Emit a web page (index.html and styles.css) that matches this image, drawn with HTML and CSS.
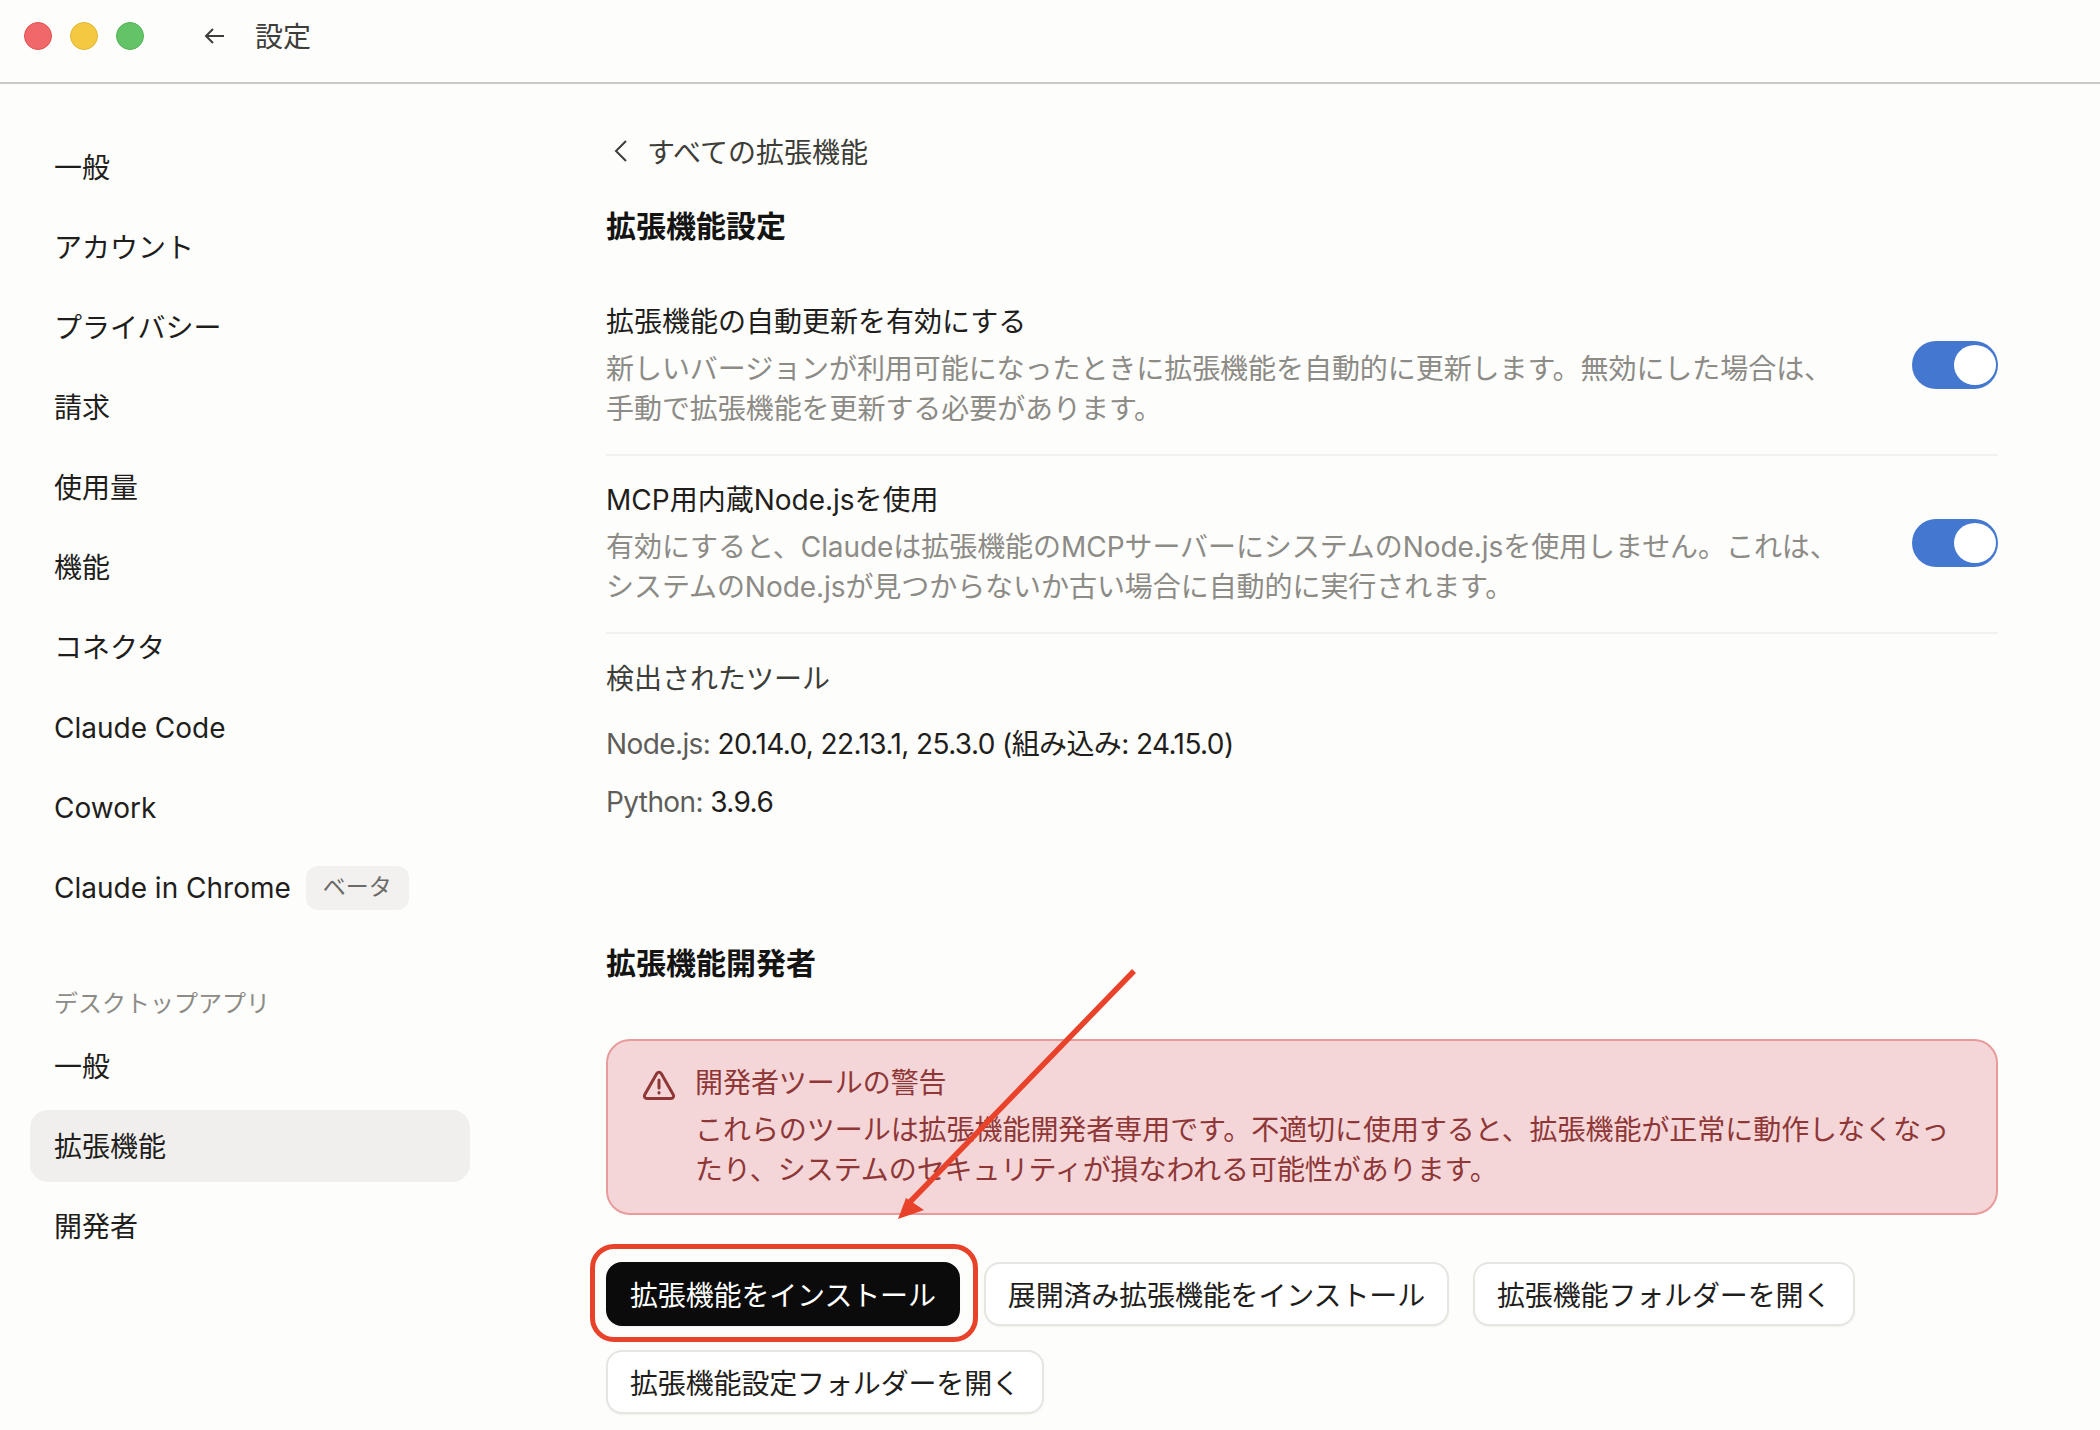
FILE: index.html
```html
<!DOCTYPE html>
<html lang="ja">

<head>
    <meta charset="UTF-8">
    <link rel="stylesheet" href="styles.css">
    <title>設定</title>
</head>

<body>
    <div class="titleBar">
        <div class="dots">
            <span class="dot red"></span>
            <span class="dot yellow"></span>
            <span class="dot green"></span>
        </div>
        <svg class="backArrow" width="24" height="24" viewBox="0 0 24 24" fill="none" stroke="#3d3d3a" stroke-width="2">
            <path d="M21 12H3M10 5l-7 7 7 7" />
        </svg>
        <div class="titleText">設定</div>
    </div>

    <div class="wrapper">
        <div class="sidebar">
            <div class="navItem">一般</div>
            <div class="navItem">アカウント</div>
            <div class="navItem">プライバシー</div>
            <div class="navItem">請求</div>
            <div class="navItem">使用量</div>
            <div class="navItem">機能</div>
            <div class="navItem">コネクタ</div>
            <div class="navItem latin">Claude Code</div>
            <div class="navItem latin">Cowork</div>
            <div class="navItem latin">Claude in Chrome <span class="badge">ベータ</span></div>
            <div class="navLabel">デスクトップアプリ</div>
            <div class="navItem">一般</div>
            <div class="navItem selected">拡張機能</div>
            <div class="navItem">開発者</div>
        </div>

        <div class="content">
            <div class="backLink">
                <svg width="18" height="24" viewBox="0 0 18 24" fill="none" stroke="#3d3d3a" stroke-width="2">
                    <path d="M14 2L4 12l10 10" />
                </svg>
                <span>すべての拡張機能</span>
            </div>
            <h2 class="heading firstHeading">拡張機能設定</h2>

            <div class="settingRow">
                <div class="settingText">
                    <div class="settingTitle">拡張機能の自動更新を有効にする</div>
                    <div class="settingDesc">新しいバージョンが利用可能になったときに拡張機能を自動的に更新します。無効にした場合は、<br>手動で拡張機能を更新する必要があります。</div>
                </div>
                <div class="toggle"><div class="knob"></div></div>
            </div>

            <div class="settingRow">
                <div class="settingText">
                    <div class="settingTitle">MCP用内蔵Node.jsを使用</div>
                    <div class="settingDesc">有効にすると、Claudeは拡張機能のMCPサーバーにシステムのNode.jsを使用しません。これは、<br>システムのNode.jsが見つからないか古い場合に自動的に実行されます。</div>
                </div>
                <div class="toggle"><div class="knob"></div></div>
            </div>

            <div class="toolsTitle">検出されたツール</div>
            <div class="toolLine"><span class="toolName">Node.js:</span> 20.14.0, 22.13.1, 25.3.0 (組み込み: 24.15.0)</div>
            <div class="toolLine"><span class="toolName">Python:</span> 3.9.6</div>

            <h2 class="heading devHeading">拡張機能開発者</h2>

            <div class="alertBox">
                <svg class="alertIcon" width="34" height="30" viewBox="0 0 34 30" fill="none" stroke="#8f3737" stroke-width="3" stroke-linejoin="round">
                    <path d="M17 2.200c-.9 0-1.700.5-2.200 1.300L2.700 24.800c-1 1.700.2 3.700 2.200 3.700h24.200c2 0 3.200-2 2.200-3.700L19.200 3.500c-.5-.8-1.300-1.300-2.200-1.300z" />
                    <path d="M17 10v8M17 22.500v.5" stroke-linecap="round" />
                </svg>
                <div>
                    <div class="alertTitle">開発者ツールの警告</div>
                    <div class="alertBody">これらのツールは拡張機能開発者専用です。不適切に使用すると、拡張機能が正常に動作しなくなっ<br>たり、システムのセキュリティが損なわれる可能性があります。</div>
                </div>
            </div>

            <div class="buttonWrapper">
                <div class="button primary">拡張機能をインストール<div class="highlight"></div></div>
                <div class="button">展開済み拡張機能をインストール</div>
                <div class="button">拡張機能フォルダーを開く</div>
                <div class="button">拡張機能設定フォルダーを開く</div>
            </div>
        </div>
    </div>

    <svg class="arrow" width="2100" height="1430" viewBox="0 0 2100 1430">
        <path d="M1134 971L908 1204" fill="none" stroke="#e8432a" stroke-width="5.500" />
        <path d="M898 1219L906 1198L924 1210z" fill="#e8432a" />
    </svg>
</body>

</html>
```

FILE: styles.css
```css
* {
    box-sizing: border-box;
}

body {
    margin: 0;
    height: 1430px;
    overflow: hidden;
    background: #fdfdfb;
    color: #1f1e1c;
    font-family: Inter, "Noto Sans CJK JP", sans-serif;
    font-size: 28px;
}

.titleBar {
    height: 84px;
    border-bottom: 2px solid #c9c9c7;
    display: flex;
    align-items: center;
    padding-left: 24px;
    padding-bottom: 10px;
}

.dots {
    display: flex;
    gap: 18px;
}

.dot {
    width: 28px;
    height: 28px;
    border-radius: 50%;
}

.red {
    background: #f0686a;
    border: 1px solid #e0504f;
}

.yellow {
    background: #f5c842;
    border: 1px solid #e5b52f;
}

.green {
    background: #62c466;
    border: 1px solid #52b356;
}

.backArrow {
    margin-left: 59px;
}

.titleText {
    margin-left: 28px;
    margin-bottom: 2px;
    color: #3d3d3a;
}

.wrapper {
    display: flex;
}

.sidebar {
    width: 606px;
    padding: 47px 0 0 30px;
    flex-shrink: 0;
}

.navItem {
    width: 440px;
    height: 72px;
    margin-bottom: 8px;
    padding-left: 24px;
    padding-bottom: 2px;
    border-radius: 18px;
    display: flex;
    align-items: center;
}

.navItem.latin {
    padding-top: 2px;
    padding-bottom: 0;
}

.navItem.selected {
    background: #f0efed;
}

.badge {
    margin-left: 15px;
    padding: 0 17px;
    height: 44px;
    line-height: 42px;
    border-radius: 12px;
    background: #f2f1ef;
    color: #6b6a66;
    font-size: 23px;
}

.navLabel {
    height: 44px;
    margin-top: 59px;
    margin-bottom: 4px;
    padding-left: 24px;
    color: #8c8b86;
    font-size: 24px;
    line-height: 44px;
}

.content {
    width: 1392px;
    padding-top: 45px;
}

.backLink {
    display: flex;
    align-items: center;
    gap: 17px;
    height: 44px;
    padding-left: 6px;
    color: #3d3d3a;
}

.heading {
    margin: 0;
    font-size: 30px;
    font-weight: 700;
    color: #141413;
}

.firstHeading {
    margin-top: 31px;
    margin-bottom: 30px;
    line-height: 44px;
}

.settingRow {
    display: flex;
    justify-content: space-between;
    align-items: center;
    padding: 22px 0 25px;
    border-bottom: 2px solid #f2f1ef;
}

.settingTitle {
    line-height: 44px;
    margin-bottom: 5px;
}

.settingDesc {
    color: #8c8b86;
    line-height: 40px;
    letter-spacing: -0.06px;
}

.toggle {
    width: 86px;
    height: 48px;
    border-radius: 24px;
    background: #4478d0;
    padding: 4px 2px 4px 0;
    display: flex;
    justify-content: flex-end;
}

.knob {
    width: 42px;
    height: 40px;
    border-radius: 50%;
    background: #fff;
}

.toolsTitle {
    margin-top: 23px;
    margin-bottom: 21px;
    line-height: 44px;
    color: #3d3d3a;
}

.toolLine {
    margin-top: 14px;
    line-height: 44px;
    letter-spacing: -0.6px;
}

.toolName {
    color: #5e5d59;
}

.devHeading {
    margin-top: 117px;
    line-height: 44px;
}

.alertBox {
    display: flex;
    gap: 19px;
    margin-top: 54px;
    height: 176px;
    padding: 21px 36px 0 34px;
    background: #f4d6d8;
    border: 2px solid #e89b9b;
    border-radius: 24px;
    color: #8f3737;
    letter-spacing: -0.05px;
}

.alertIcon {
    margin-top: 8px;
}

.alertTitle {
    line-height: 42px;
}

.alertBody {
    line-height: 40px;
    margin-top: 6px;
}

.buttonWrapper {
    display: flex;
    flex-wrap: wrap;
    gap: 24px;
    margin-top: 47px;
}

.button {
    position: relative;
    height: 64px;
    padding: 0 22px;
    display: flex;
    align-items: center;
    background: #fff;
    border: 2px solid #e6e5e1;
    border-radius: 16px;
    box-shadow: 0 1px 2px rgba(0, 0, 0, 0.05);
    letter-spacing: -0.15px;
}

.button.primary {
    background: #0b0b0b;
    border-color: #0b0b0b;
    color: #fff;
}

.highlight {
    position: absolute;
    top: -20px;
    right: -20px;
    bottom: -18px;
    left: -18px;
    border: 5px solid #e8432a;
    border-radius: 24px;
}

.arrow {
    position: absolute;
    top: 0;
    left: 0;
}
```
